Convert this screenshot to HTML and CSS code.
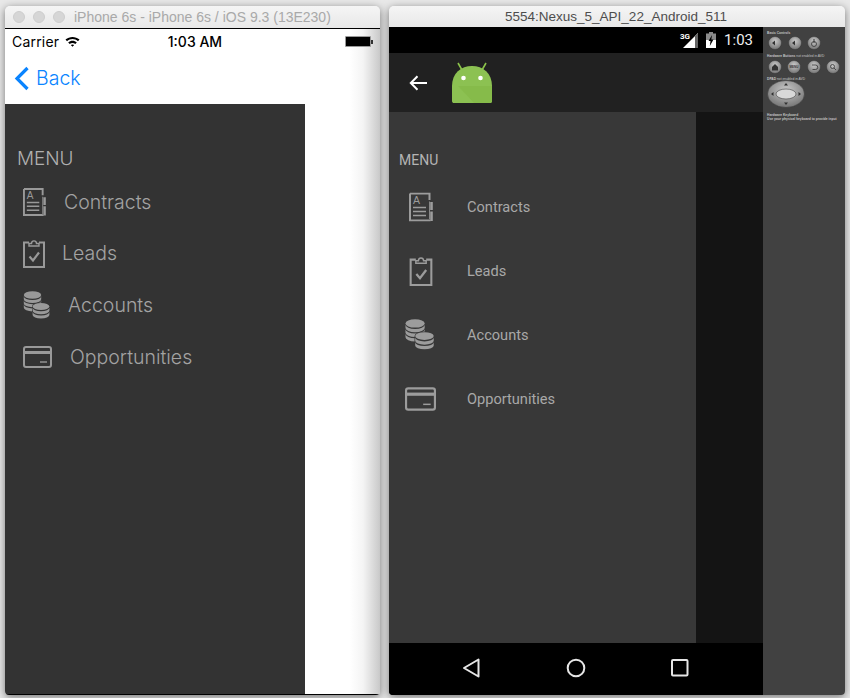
FILE: index.html
```html
<!DOCTYPE html>
<html lang="en">
<head>
<meta charset="utf-8">
<title>Simulators</title>
<link rel="stylesheet" href="styles.css">
</head>
<body>
<svg class="defs" width="0" height="0" aria-hidden="true">
  <symbol id="i-contract" viewBox="0 0 24 29">
    <path d="M1 1H20.500V7.500M20.500 27.500V28H1V1" fill="none" stroke="currentColor" stroke-width="2"/>
    <path d="M22.500 9.500V17.500M22.500 19V28.500" fill="none" stroke="currentColor" stroke-width="2.600"/>
    <path d="M20.500 9V27" fill="none" stroke="currentColor" stroke-width=".8"/>
    <path d="M4 15H17M4 19H17M4 23H17" fill="none" stroke="currentColor" stroke-width="1.600"/>
  </symbol>
  <symbol id="i-lead" viewBox="0 0 22 29">
    <path d="M6 3.500H1V28H21V3.500H16" fill="none" stroke="currentColor" stroke-width="2"/>
    <path d="M6 7V4.500H8.500C8.700 1 13.300 1 13.500 4.500H16V7Z" fill="none" stroke="currentColor" stroke-width="1.400"/>
    <path d="M6.500 17.500L10 21.500L16 13.500" fill="none" stroke="currentColor" stroke-width="2.200"/>
  </symbol>
  <symbol id="i-coins" viewBox="0 0 27 29">
    <g fill="currentColor">
      <ellipse cx="9.500" cy="4" rx="8.700" ry="3.800"/>
      <path d="M.8 5.200A8.700 3.800 0 0 0 18.200 5.200V8.200A8.700 3.800 0 0 1 .8 8.200Z"/>
      <path d="M.8 9.400A8.700 3.800 0 0 0 18.200 9.400V12.400A8.700 3.800 0 0 1 .8 12.400Z"/>
      <path d="M.8 13.600A8.700 3.800 0 0 0 18.200 13.600V16.600A8.700 3.800 0 0 1 .8 16.600Z"/>
    </g>
    <path class="coin-cut" d="M9.600 15.500A8.400 3.500 0 0 1 26.400 15.500V24A8.400 3.500 0 0 1 9.600 24Z"/>
    <g fill="currentColor">
      <ellipse cx="18" cy="15.500" rx="8.400" ry="3.500"/>
      <path d="M9.600 16.800A8.400 3.500 0 0 0 26.400 16.800V19.800A8.400 3.500 0 0 1 9.600 19.800Z"/>
      <path d="M9.600 21A8.400 3.500 0 0 0 26.400 21V24A8.400 3.500 0 0 1 9.600 24Z"/>
    </g>
  </symbol>
  <symbol id="i-card" viewBox="0 0 29 22">
    <rect x="1" y="1" width="27" height="20" rx="2" fill="none" stroke="currentColor" stroke-width="2"/>
    <path d="M1 6.500H28" fill="none" stroke="currentColor" stroke-width="3"/>
    <path d="M17 16H24" fill="none" stroke="currentColor" stroke-width="1.400"/>
  </symbol>
</svg>

<main class="desktop">
  <section class="win win-ios">
    <header class="titlebar titlebar-ios">
      <span class="lights"><i class="light"></i><i class="light"></i><i class="light"></i></span>
      <span class="title-ios">iPhone 6s - iPhone 6s / iOS 9.3 (13E230)</span>
    </header>
    <div class="ios-screen">
      <div class="ios-status">
        <span class="carrier">Carrier</span>
        <svg class="wifi" viewBox="0 0 15 11" width="15" height="11"><path d="M.5 3.600C4.500 0 10.500 0 14.500 3.600L13 5.200C9.800 2.400 5.200 2.400 2 5.200ZM3.200 6.400C5.600 4.300 9.400 4.300 11.800 6.400L10.300 8C8.700 6.600 6.300 6.600 4.700 8ZM5.800 9C6.800 8.200 8.200 8.200 9.200 9L7.500 10.800Z" fill="#000"/></svg>
        <span class="ios-time">1:03 AM</span>
        <span class="ios-battery"><i class="ios-battery-body"></i><i class="ios-battery-tip"></i></span>
      </div>
      <nav class="ios-nav">
        <svg class="chevron" viewBox="0 0 16 25" width="16" height="25"><path d="M13.500 2L3 12.500L13.500 23" fill="none" stroke="#0a84ff" stroke-width="3.200"/></svg>
        <span class="back-label">Back</span>
      </nav>
      <aside class="ios-drawer">
        <h2 class="ios-menu">MENU</h2>
        <ul class="ios-list">
          <li class="ios-row"><svg class="ic-contract" viewBox="0 0 24 29"><use href="#i-contract"/><text x="4" y="11.500" class="icon-a">A</text></svg><span>Contracts</span></li>
          <li class="ios-row"><svg class="ic-lead"><use href="#i-lead"/></svg><span class="ios-lead-label">Leads</span></li>
          <li class="ios-row"><svg class="ic-coins"><use href="#i-coins"/></svg><span>Accounts</span></li>
          <li class="ios-row"><svg class="ic-card"><use href="#i-card"/></svg><span>Opportunities</span></li>
        </ul>
      </aside>
    </div>
  </section>

  <section class="win win-android">
    <header class="titlebar titlebar-android">5554:Nexus_5_API_22_Android_511</header>
    <div class="emu">
      <div class="droid">
        <div class="droid-status">
          <span class="net">3G</span>
          <svg class="signal" viewBox="0 0 15 15" width="15" height="15"><path d="M15 0V15H0Z" fill="#fff"/><path d="M15 0V15H12V3Z" fill="#666"/></svg>
          <svg class="droid-batt" viewBox="0 0 10 16" width="10" height="16"><path d="M3 0H7V1.500H10V16H0V1.500H3Z" fill="#8a8a8a"/><path d="M0 8H10V16H0Z" fill="#fff"/><path d="M6 3L2.500 9H4.500L3.800 14L7.500 7.500H5.300Z" fill="#000"/></svg>
          <span class="droid-time">1:03</span>
        </div>
        <div class="toolbar">
          <svg class="arrow" viewBox="0 0 18 16" width="18" height="16"><path d="M18 8H2M8.500 1.200L1.800 8L8.500 14.800" fill="none" stroke="#fff" stroke-width="2"/></svg>
          <svg class="logo" viewBox="0 0 40 42" width="40" height="42">
            <path d="M6 1L10 8M34 1L30 8" stroke="#8bc34a" stroke-width="1.600"/>
            <path d="M0 24C0 11 9 4 20 4S40 11 40 24V39C40 40.500 39 41 38 41H2C1 41 0 40.500 0 39Z" fill="#8cc152"/>
            <path d="M6 24H40V39C40 40.500 39 41 38 41H22Z" fill="#86bb4a"/>
            <circle cx="11.500" cy="16" r="2.300" fill="#fff"/><circle cx="28.500" cy="16" r="2.300" fill="#fff"/>
          </svg>
        </div>
        <div class="droid-body">
          <aside class="droid-drawer">
            <h2 class="droid-menu">MENU</h2>
            <ul class="droid-list">
              <li class="droid-row"><span class="droid-icon"><svg class="da-contract" viewBox="0 0 24 29"><use href="#i-contract"/><text x="4" y="11.500" class="icon-a">A</text></svg></span><span>Contracts</span></li>
              <li class="droid-row"><span class="droid-icon"><svg class="da-lead"><use href="#i-lead"/></svg></span><span>Leads</span></li>
              <li class="droid-row"><span class="droid-icon"><svg class="da-coins"><use href="#i-coins"/></svg></span><span>Accounts</span></li>
              <li class="droid-row"><span class="droid-icon"><svg class="da-card"><use href="#i-card"/></svg></span><span>Opportunities</span></li>
            </ul>
          </aside>
          <div class="scrim"></div>
        </div>
        <div class="softkeys">
          <svg viewBox="0 0 18 20" width="18" height="20"><path d="M16.500 1.500V18.500L2 10Z" fill="none" stroke="#e6e6e6" stroke-width="2" stroke-linejoin="round"/></svg>
          <svg viewBox="0 0 20 20" width="20" height="20"><circle cx="10" cy="10" r="8.300" fill="none" stroke="#e6e6e6" stroke-width="2"/></svg>
          <svg viewBox="0 0 18 18" width="18" height="18"><rect x="1" y="1" width="15.500" height="15.500" rx="1" fill="none" stroke="#e6e6e6" stroke-width="2"/></svg>
        </div>
      </div>
      <aside class="skin">
        <svg class="skin-svg" viewBox="0 0 82 100" width="82" height="100">
          <defs>
            <radialGradient id="btn" cx=".5" cy=".35" r=".7"><stop offset="0" stop-color="#c9c9c9"/><stop offset="1" stop-color="#6e6e6e"/></radialGradient>
          </defs>
          <g class="skin-label">
            <text x="4" y="6.500"><tspan class="skin-strong">Basic Controls</tspan></text>
            <text x="4" y="29.500"><tspan class="skin-strong">Hardware Buttons</tspan> not enabled in AVD</text>
            <text x="4" y="52.500"><tspan class="skin-strong">DPAD</tspan> not enabled in AVD</text>
            <text x="4" y="88.500"><tspan class="skin-strong">Hardware Keyboard</tspan></text>
            <text x="4" y="92.500"><tspan class="skin-strong">Use your physical keyboard to provide input</tspan></text>
          </g>
          <g transform="translate(0 -3)">
            <g fill="url(#btn)" stroke="#333" stroke-width=".5">
              <circle cx="12" cy="19" r="6.500"/><circle cx="32" cy="19" r="6.500"/><circle cx="51" cy="19" r="6.500"/>
              <circle cx="12" cy="43" r="6.500"/><circle cx="31" cy="43" r="6.500"/><circle cx="51" cy="43" r="6.500"/><circle cx="70" cy="43" r="6.500"/>
              <ellipse cx="23" cy="70" rx="18.500" ry="13.500"/>
            </g>
            <ellipse cx="23" cy="70" rx="10" ry="5" fill="#d8d8d8" stroke="#444" stroke-width=".6"/>
            <g fill="#333">
              <path d="M9 19L12 16.500V21.500ZM29 19L32 16.500V21.500Z"/>
              <path d="M12 40L9 43V46.500H15V43Z"/><rect x="50.500" y="15" width="1" height="4"/>
              <path d="M23 59L21 61.500H25ZM23 81L21 78.500H25ZM8 70L10.500 68V72ZM38 70L35.500 68V72Z"/>
            </g>
            <g fill="none" stroke="#333" stroke-width=".8">
              <circle cx="51" cy="20" r="2.500"/><path d="M49 41H52.500A2.200 2.200 0 0 1 52.500 45.500H49.500"/><circle cx="69.500" cy="42.500" r="2"/><path d="M71 44L73 46"/>
            </g>
            <text x="31" y="44" class="skin-menu">MENU</text>
          </g>
        </svg>
      </aside>
    </div>
  </section>
</main>
</body>
</html>
```

FILE: styles.css
```css
* { box-sizing: border-box; }
html, body { margin: 0; padding: 0; }
body { width: 850px; height: 698px; overflow: hidden; background: #e9e9e9; }
ul { list-style: none; margin: 0; padding: 0; }
h2 { margin: 0; font-weight: inherit; font-size: inherit; }
svg { display: block; }
.defs { position: absolute; }
.icon-a { font: 400 10.500px "Liberation Sans", sans-serif; fill: currentColor; }
.coin-cut { fill: var(--cut); stroke: var(--cut); stroke-width: 1.200px; }

.desktop { display: flex; gap: 9px; width: 850px; height: 698px; padding: 6px 5px 3px 5px; }
.win { height: 689px; border-radius: 5px 5px 4px 4px; overflow: hidden; box-shadow: 0 2px 9px rgba(0,0,0,.5); display: flex; flex-direction: column; }
.win-ios { width: 375px; }
.win-android { width: 456px; }

.titlebar { flex: none; background: linear-gradient(#f5f5f5, #e8e8e8); display: flex; align-items: center; }
.titlebar-ios { height: 22px; padding-left: 8px; }
.lights { display: flex; gap: 8px; }
.light { width: 12px; height: 12px; border-radius: 50%; background: #d6d6d6; border: 1px solid #cdcdcd; }
.title-ios { margin-left: 9px; font: 400 14px "Liberation Sans", sans-serif; color: #a9a9a9; }
.titlebar-android { height: 21px; justify-content: center; padding-right: 2px; font: 400 13.500px "Liberation Sans", sans-serif; color: #4d4d4d; }

.ios-screen { flex: 1; min-height: 0; display: flex; flex-direction: column; background: linear-gradient(90deg, #fff 345px, #f4f4f4 358px, #c9c9c9 375px); border-top: 1px solid #000; border-bottom: 1px solid #000; }
.ios-status { flex: none; height: 24px; display: flex; align-items: center; padding: 1px 0 0 7px; font: 400 14px "Inter", "Liberation Sans", sans-serif; color: #000; }
.carrier { letter-spacing: .2px; }
.wifi { margin-left: 6px; }
.ios-time { margin-left: 87.500px; font-weight: 500; }
.ios-battery { margin-left: 123px; display: flex; align-items: center; }
.ios-battery-body { width: 26px; height: 11px; background: #000; border: 1px solid #999; border-radius: 1px; }
.ios-battery-tip { width: 2px; height: 4px; background: #333; }
.ios-nav { flex: none; height: 51px; display: flex; align-items: center; padding: 0 0 0 9px; gap: 6px; }
.back-label { font: 300 19.500px "Inter", "Liberation Sans", sans-serif; color: #0a84ff; padding-bottom: 1px; }
.ios-drawer { flex: 1; min-height: 0; width: 300px; background: #333; color: #a3a3a3; padding: 45px 0 0 12px; font: 300 19.500px "Inter", "Liberation Sans", sans-serif; }
.ios-menu { font-size: 18.900px; line-height: 20px; color: #b0b0b0; }
.ios-list { margin-top: 7px; padding-left: 6px; }
.ios-row { height: 51.700px; display: flex; align-items: center; gap: 18px; }
.ios-lead-label { margin: -1px 0 0 -1px; }
.ic-contract { width: 23px; height: 28px; color: #999; }
.ic-lead { width: 22px; height: 29px; color: #999; }
.ic-coins { width: 27px; height: 29px; color: #999; --cut: #333; }
.ic-card { width: 29px; height: 22px; color: #999; }

.emu { flex: 1; min-height: 0; display: flex; }
.droid { width: 374px; display: flex; flex-direction: column; background: #000; }
.droid-status { flex: none; height: 26px; display: flex; align-items: center; justify-content: flex-end; padding-right: 10px; color: #fff; font-family: "Roboto", sans-serif; }
.net { font-size: 8px; font-weight: 700; margin-right: -7px; transform: translateY(-4px); }
.signal { margin-right: 8px; }
.droid-batt { margin-right: 8px; }
.droid-time { font-size: 15px; font-weight: 400; color: #eee; }
.toolbar { flex: none; height: 59px; background: #212121; display: flex; align-items: center; padding: 0 0 0 20px; gap: 25px; }
.droid-body { flex: 1; min-height: 0; display: flex; }
.droid-drawer { width: 307px; background: #383838; color: #a8a8a8; font: 400 14.600px "Roboto", sans-serif; padding: 40px 0 0 10px; }
.droid-menu { font-size: 14px; line-height: 16px; color: #b4b4b4; }
.droid-list { margin-top: 7px; }
.droid-row { height: 64px; display: flex; align-items: center; }
.droid-icon { width: 68px; padding-right: 25px; display: flex; justify-content: center; }
.da-contract { width: 24px; height: 30px; color: #9c9c9c; }
.da-lead { width: 24px; height: 30px; color: #9c9c9c; }
.da-coins { width: 31px; height: 32px; color: #9c9c9c; --cut: #383838; margin-right: 2px; }
.da-card { width: 31px; height: 24px; color: #9c9c9c; }
.scrim { flex: 1; background: #141414; }
.softkeys { flex: none; height: 52px; background: #000; display: flex; align-items: center; justify-content: space-between; padding: 0 74px 2px 73px; }
.skin { flex: 1; background: #414141; }
.skin-label { font: 400 3.300px "Liberation Sans", sans-serif; fill: #c4c4c4; }
.skin-strong { font-weight: 700; }
.skin-menu { font: 700 3px "Liberation Sans", sans-serif; fill: #333; text-anchor: middle; }
```
